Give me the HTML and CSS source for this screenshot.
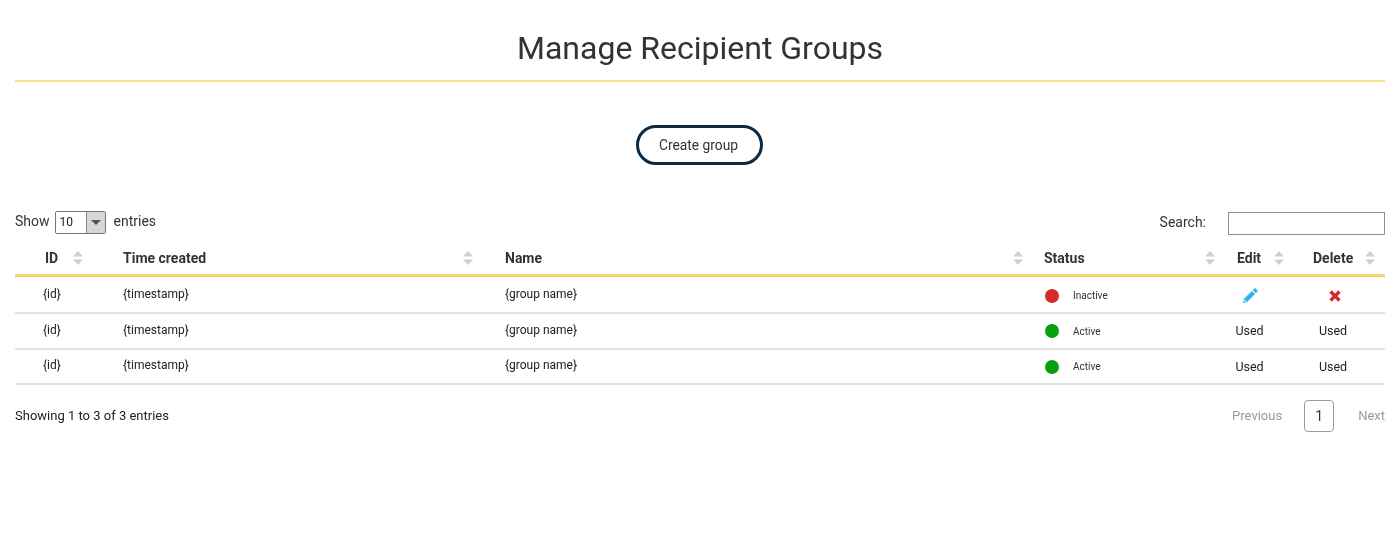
FILE: index.html
```html
<!DOCTYPE html>
<html lang="en">
<head>
<meta charset="utf-8">
<title>Manage Recipient Groups</title>
<link rel="stylesheet" href="styles.css">
</head>
<body>
<main class="page">
  <h1 class="title">Manage Recipient Groups</h1>
  <div class="actions"><button class="btn" type="button">Create group</button></div>
  <div class="controls">
    <div class="length"><span>Show</span>
      <div class="select"><span class="select-val">10</span><span class="select-btn"><i class="tri"></i></span></div>
      <span>entries</span></div>
    <label class="search"><span>Search:</span><input class="search-input" type="text"></label>
  </div>
  <table class="grid">
    <colgroup><col class="c1"><col class="c2"><col class="c3"><col class="c4"><col class="c5"><col class="c6"></colgroup>
    <thead>
      <tr>
        <th class="h-id"><div class="th"><span>ID</span><svg class="sort" viewBox="0 0 10 14"><path d="M5 0l5 5.500H0z"/><path d="M5 14L0 8.500h10z"/></svg></div></th>
        <th class="h-time"><div class="th"><span>Time created</span><svg class="sort" viewBox="0 0 10 14"><path d="M5 0l5 5.500H0z"/><path d="M5 14L0 8.500h10z"/></svg></div></th>
        <th class="h-name"><div class="th"><span>Name</span><svg class="sort" viewBox="0 0 10 14"><path d="M5 0l5 5.500H0z"/><path d="M5 14L0 8.500h10z"/></svg></div></th>
        <th class="h-status"><div class="th"><span>Status</span><svg class="sort" viewBox="0 0 10 14"><path d="M5 0l5 5.500H0z"/><path d="M5 14L0 8.500h10z"/></svg></div></th>
        <th class="h-edit"><div class="th"><span>Edit</span><svg class="sort" viewBox="0 0 10 14"><path d="M5 0l5 5.500H0z"/><path d="M5 14L0 8.500h10z"/></svg></div></th>
        <th class="h-del"><div class="th"><span>Delete</span><svg class="sort" viewBox="0 0 10 14"><path d="M5 0l5 5.500H0z"/><path d="M5 14L0 8.500h10z"/></svg></div></th>
      </tr>
    </thead>
    <tbody>
      <tr class="r1">
        <td class="d-id">{id}</td><td class="d-time">{timestamp}</td><td class="d-name">{group name}</td>
        <td class="d-status"><div class="st"><i class="dot red"></i><span class="st-label">Inactive</span></div></td>
        <td class="d-edit"><svg class="ic-edit" viewBox="0 0 15 15"><path fill="#29b6f0" d="M11.200.6a1 1 0 0 1 1.400 0l1.800 1.800a1 1 0 0 1 0 1.400l-1.500 1.500-3.200-3.200zM8.900 2.900l3.200 3.200-7.900 7.900-4.200 1 1-4.200z"/><path fill="#fff" d="M1.700 11.500l1.800 1.800-2.200.5z"/></svg></td>
        <td class="d-del"><svg class="ic-del" viewBox="0 0 12 12"><path fill="none" stroke="#d32a2a" stroke-width="3.400" d="M1.500 1.500l9 9M10.500 1.500l-9 9"/></svg></td>
      </tr>
      <tr class="r2">
        <td class="d-id">{id}</td><td class="d-time">{timestamp}</td><td class="d-name">{group name}</td>
        <td class="d-status"><div class="st"><i class="dot green"></i><span class="st-label">Active</span></div></td>
        <td class="d-edit used">Used</td><td class="d-del used">Used</td>
      </tr>
      <tr class="r3">
        <td class="d-id">{id}</td><td class="d-time">{timestamp}</td><td class="d-name">{group name}</td>
        <td class="d-status"><div class="st"><i class="dot green"></i><span class="st-label">Active</span></div></td>
        <td class="d-edit used">Used</td><td class="d-del used">Used</td>
      </tr>
    </tbody>
  </table>
  <div class="footer">
    <div class="info">Showing 1 to 3 of 3 entries</div>
    <nav class="pager"><span class="pg-off">Previous</span><span class="pg-cur">1</span><span class="pg-off">Next</span></nav>
  </div>
</main>
</body>
</html>
```
FILE: styles.css
```css
* { box-sizing: border-box; }
html, body { margin: 0; padding: 0; background: #fff; }
body { font-family: Roboto, "Liberation Sans", sans-serif; font-size: 13px; color: #333; }
.page { padding: 0 15px; will-change: transform; }
.title { margin: 0; height: 82px; padding-top: 29px; border-bottom: 2px solid #f8e08e; font-size: 32px; font-weight: 400; line-height: 38px; text-align: center; color: #333; }
.actions { display: flex; justify-content: center; padding-top: 43px; padding-right: 1px; }
.btn { width: 127px; height: 40px; border: 3px solid #0e2a40; border-radius: 20px; background: #fff; font-family: Roboto, sans-serif; font-size: 13.800px; color: #333; padding: 0 2px 0 0; }
.controls { display: flex; justify-content: space-between; align-items: flex-start; margin-top: 46px; height: 33px; font-size: 14px; }
.length { display: flex; align-items: flex-start; line-height: 20px; }
.select { display: flex; width: 51px; height: 23px; margin: 0 7px 0 5px; border: 1px solid #767676; border-radius: 2px; font-size: 12px; line-height: 21px; }
.length > span:last-child { padding-left: 1px; }
.select-val { flex: 1; padding-left: 4px; color: #222; }
.select-btn { width: 19px; background: #d6d6d6; border-left: 1px solid #8a8a8a; display: flex; align-items: center; justify-content: center; }
.tri { width: 0; height: 0; border-left: 5px solid transparent; border-right: 5px solid transparent; border-top: 5px solid #555; }
.search { display: flex; align-items: flex-start; line-height: 20px; padding-top: 1px; }
.search-input { width: 157px; height: 23px; margin: 0 0 0 22px; border: 1px solid #8f8f8f; padding: 0; background: #fff; }
.grid { width: 1370px; border-collapse: separate; border-spacing: 0; table-layout: fixed; }
.c1 { width: 78px; } .c2 { width: 390px; } .c3 { width: 550px; } .c4 { width: 192px; } .c5 { width: 69px; } .c6 { width: 91px; }
th { height: 33px; padding: 0; border-bottom: 3px solid #fbd666; font-size: 14px; font-weight: 700; text-align: left; color: #333; vertical-align: top; }
.th { display: flex; justify-content: space-between; align-items: center; padding-right: 10px; height: 28px; }
.sort { width: 10px; height: 14px; fill: #d0d0d0; flex: none; }
.h-id .th { padding-left: 30px; }
.h-time .th { padding-left: 30px; }
.h-name .th { padding-left: 22px; }
.h-status .th { padding-left: 11px; }
.h-edit .th { padding-left: 12px; }
.h-del .th { padding-left: 19px; }
td { padding: 0; border-bottom: 2px solid #e2e2e2; font-size: 12px; color: #222; vertical-align: middle; }
.r1 td { height: 37px; padding-bottom: 1px; }
.r2 td { height: 36px; padding-bottom: 3px; }
.r3 td { height: 35px; padding-bottom: 3px; }
.d-id { padding-left: 28px !important; }
.d-time { padding-left: 30px !important; }
.d-name { padding-left: 22px !important; }
.d-status { padding-left: 12px !important; }
.d-edit { text-align: center; padding-right: 20px !important; }
.d-del { text-align: center; padding-right: 13px !important; }
.r1 .d-edit { padding-right: 18px !important; }
.r1 .d-del { padding-right: 9px !important; }
.r2 .used, .r3 .used { font-size: 12.500px; color: #222; padding-bottom: 1px; }
.st { display: flex; align-items: center; padding-top: 3px; }
.dot { width: 14px; height: 14px; border-radius: 50%; flex: none; }
.red { background: #d32a2a; }
.green { background: #069f0f; }
.st-label { margin-left: 14px; font-size: 10px; color: #333; }
.ic-edit { width: 15px; height: 15px; display: block; margin: 2px auto 0; }
.ic-del { width: 12px; height: 12px; display: block; margin: 3px auto 0; }
.footer { display: flex; justify-content: space-between; align-items: flex-start; padding-top: 15px; font-size: 13px; }
.info { line-height: 32px; margin-top: 0; color: #222; }
.pager { display: flex; align-items: center; line-height: 30px; }
.pg-off { color: #999; }
.pg-cur { width: 30px; height: 32px; margin: 0 24px 0 22px; border: 1px solid #999; border-radius: 4px; text-align: center; font-size: 14px; color: #333; }
```
